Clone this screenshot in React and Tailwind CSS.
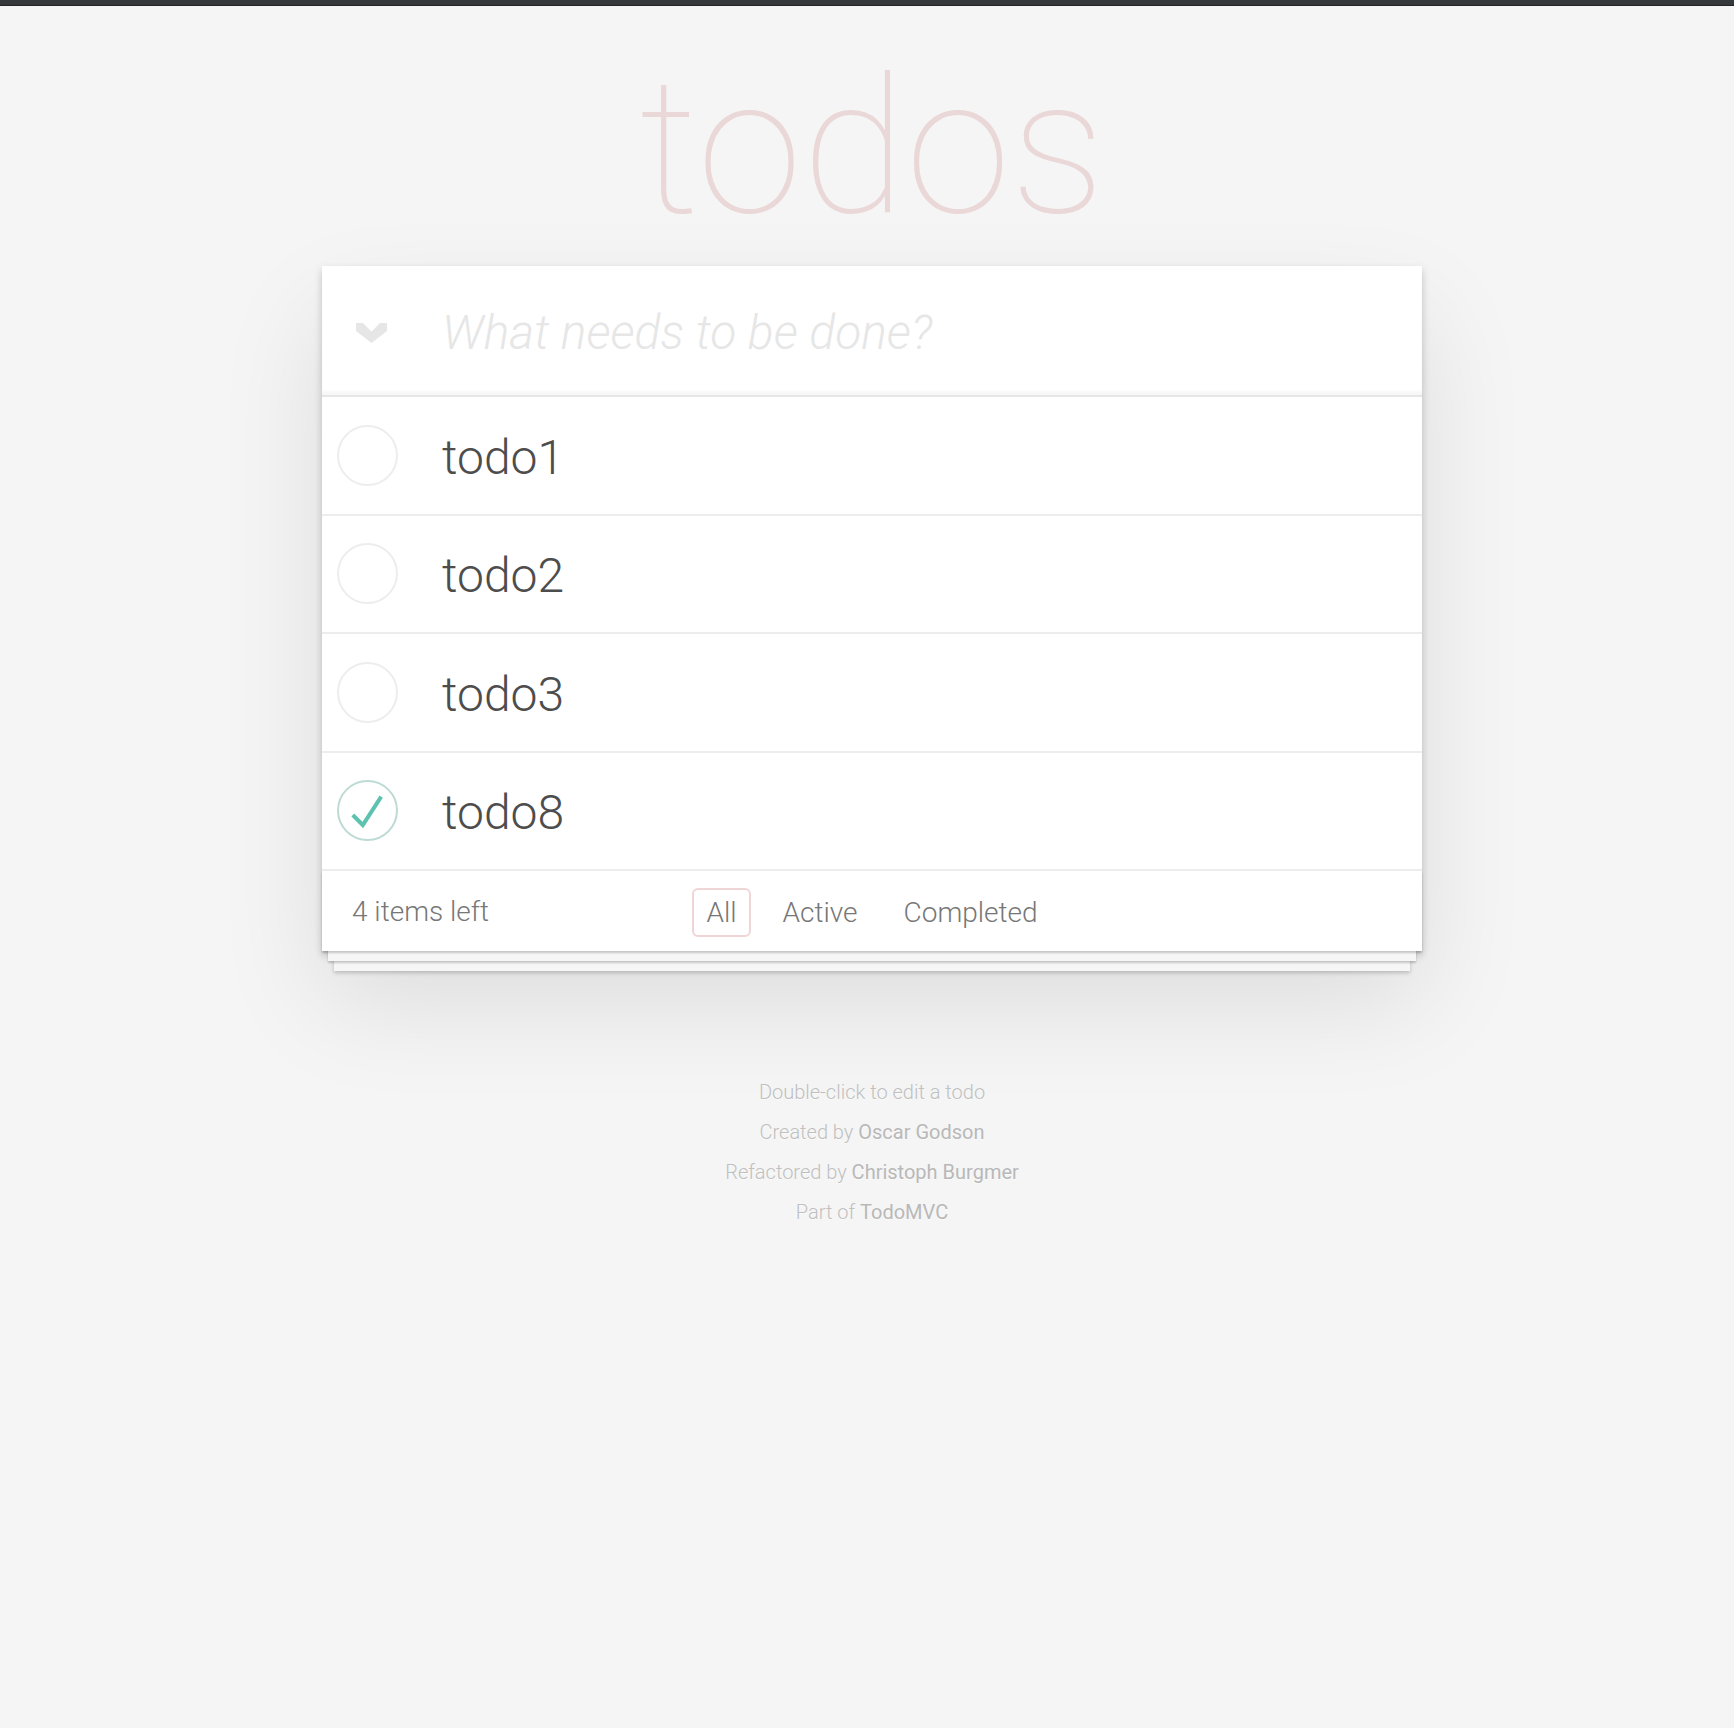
import React, { useState } from 'react';

const initialTodos = [
  { id: 1, title: 'todo1', completed: false },
  { id: 2, title: 'todo2', completed: false },
  { id: 3, title: 'todo3', completed: false },
  { id: 8, title: 'todo8', completed: true },
];

function Chevron() {
  return (
    <svg width="31" height="20" viewBox="0 0 31 20">
      <polygon points="0,0 7,0 15.5,8.5 24,0 31,0 31,8 15.5,20 0,8" fill="#e6e6e6" />
    </svg>
  );
}

function Toggle({ checked, onClick }) {
  return (
    <button onClick={onClick} className="w-[61px] h-[61px] shrink-0">
      <svg width="61" height="61" viewBox="0 0 61 61">
        <circle cx="30.5" cy="30.5" r="29.5" fill="none" stroke={checked ? '#bddad5' : '#ededed'} strokeWidth="2" />
        {checked && (
          <polyline points="15.8,35 25.8,45 44.2,16.7" fill="none" stroke="#5dc2af" strokeWidth="4" />
        )}
      </svg>
    </button>
  );
}

export default function App() {
  const [todos, setTodos] = useState(initialTodos);
  const [filter, setFilter] = useState('all');
  const [text, setText] = useState('');

  const left = 4;

  const toggle = id => {
    setTodos(ts => ts.map(t => (t.id === id ? { ...t, completed: !t.completed } : t)));
  };

  const filters = [
    { key: 'all', label: 'All' },
    { key: 'active', label: 'Active' },
    { key: 'completed', label: 'Completed' },
  ];

  return (
    <div className="min-h-screen bg-[#f5f5f5] font-['Roboto',sans-serif] font-light text-[#4d4d4d]">
      <div className="h-[6px] bg-[#36393c] border-b border-[#232323]" />
      <div className="pl-[10px] pt-[41px]">
        <h1 className="h-[196px] text-center text-[190px] leading-[200px] font-thin text-[#ead7d7]">todos</h1>

        <section className="mt-[23px] mx-auto w-[1100px] bg-white shadow-[0_4px_8px_0_rgba(0,0,0,0.2),0_50px_100px_0_rgba(0,0,0,0.1)]">
          <header className="h-[131px] flex items-center border-b-2 border-[#e6e6e6] shadow-[inset_0_-4px_2px_rgba(0,0,0,0.03)]">
            <div className="w-[98px] pt-[4px] flex justify-center">
              <Chevron />
            </div>
            <input
              value={text}
              onChange={e => setText(e.target.value)}
              placeholder="What needs to be done?"
              className="flex-1 pl-[22px] pr-[32px] pt-[4px] text-[48px] leading-[66px] bg-transparent outline-none text-[#4d4d4d] placeholder:italic placeholder:font-light placeholder:text-[#e6e6e6]"
            />
          </header>

          <ul>
            {todos.map(todo => (
              <li key={todo.id} className="h-[118.5px] flex items-center border-b-2 border-[#ededed]">
                <div className="w-[120px] pl-[15px] flex">
                  <Toggle checked={todo.completed} onClick={() => toggle(todo.id)} />
                </div>
                <label className="pt-[5px] text-[48px] leading-[58px] text-[#4d4d4d]">{todo.title}</label>
              </li>
            ))}
          </ul>

          <footer className="h-[80px] px-[30px] pt-[2px] grid grid-cols-[1fr_auto_1fr] items-center text-[28px] text-[#777] shadow-[0_2px_2px_rgba(0,0,0,0.2),0_16px_0_-6px_#f6f6f6,0_18px_2px_-6px_rgba(0,0,0,0.2),0_32px_0_-12px_#f6f6f6,0_34px_4px_-12px_rgba(0,0,0,0.2)]">
            <span>{left} items left</span>
            <ul className="flex gap-[18px]">
              {filters.map(f => (
                <li key={f.key}>
                  <button
                    onClick={() => setFilter(f.key)}
                    className={
                      'px-[12px] py-[6px] leading-[33px] rounded-[6px] border-2 ' +
                      (filter === f.key ? 'border-[#efd5d5]' : 'border-transparent')
                    }
                  >
                    {f.label}
                  </button>
                </li>
              ))}
            </ul>
            <span />
          </footer>
        </section>

        <div className="mt-[131px] flex flex-col gap-[20px] items-center text-[20px] leading-[20px] text-[#bfbfbf] [text-shadow:0_1px_0_rgba(255,255,255,0.5)]">
          <p>Double-click to edit a todo</p>
          <p>Created by <a className="font-normal text-[#b8b8b8]">Oscar Godson</a></p>
          <p>Refactored by <a className="font-normal text-[#b8b8b8]">Christoph Burgmer</a></p>
          <p>Part of <a className="font-normal text-[#b8b8b8]">TodoMVC</a></p>
        </div>
      </div>
    </div>
  );
}
